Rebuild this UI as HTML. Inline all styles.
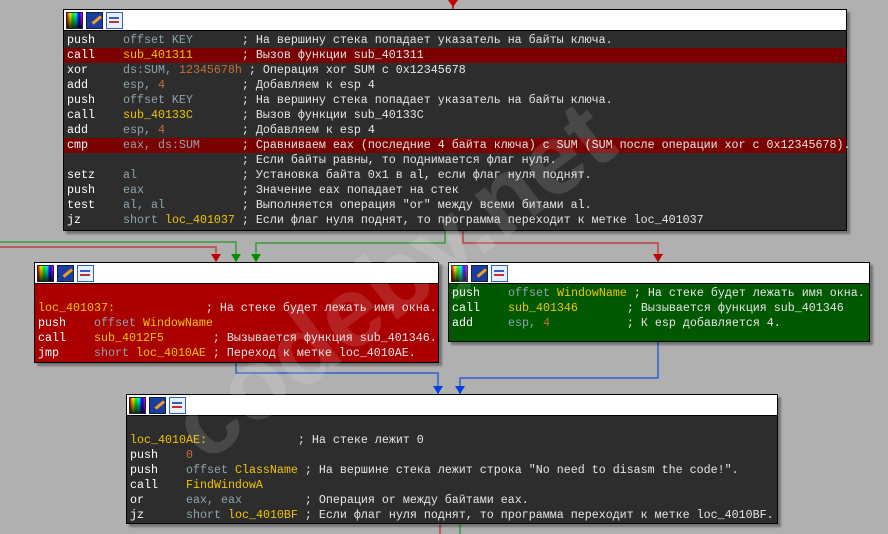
<!DOCTYPE html>
<html><head><meta charset="utf-8"><style>
body{margin:0;width:888px;height:534px;background:#b0b0b0;position:relative;overflow:hidden;font-family:"Liberation Mono",monospace;}
.blk{position:absolute;border:1px solid #000;box-shadow:3px 3px 2px rgba(0,0,0,.35);}
.hd{background:#fff;height:20px;border-bottom:1px solid #000;position:relative}
.ic{position:absolute;top:2px;width:15px;height:15px;border:1px solid #223}
.ic1{left:2px;background:linear-gradient(90deg,#f00,#ff0,#0f0,#0ff,#00f,#f0f);}
.ic1:after{content:"";position:absolute;inset:0;background:linear-gradient(#0000,#000c)}
.ic2{left:22px;background:#1a3ea0;border-color:#123}
.ic2:after{content:"";position:absolute;left:3px;top:2px;width:11px;height:3px;background:#f0a020;transform:rotate(-40deg);transform-origin:right}
.ic3{left:42px;background:#e8f0ff;border-color:#3060c0}
.ic3:after{content:"";position:absolute;left:2px;top:4px;width:10px;height:2px;background:#3060c0;box-shadow:0 4px 0 #c03030}
.bd{font-size:11.67px;line-height:15px;white-space:pre;color:#e6e6e6;padding:2px 0 0 3px}
.hl{background:#7a0000;margin-left:-3px;padding-left:3px}
.g{color:#8fa3ad}.y{color:#f0c400}.n{color:#cc6a3a}.w{color:#fff}
.ln{position:absolute}
</style></head><body>
<svg class="ln" width="888" height="534" style="left:0;top:0">
<g fill="none" stroke-width="1.5">
<path d="M453 0V9" stroke="#c00000"/>
<path d="M445 230V243H256V262" stroke="#3a9a3a"/>
<path d="M0 242H236V262" stroke="#3a9a3a"/>
<path d="M0 247H216V262" stroke="#c04040"/>
<path d="M463 230V243H658V262" stroke="#c04040"/>
<path d="M236 362V373H438V394" stroke="#3060d0"/>
<path d="M658 341V378H460V394" stroke="#3060d0"/>
<path d="M440 524V534" stroke="#c04040"/>
<path d="M460 524V534" stroke="#3a9a3a"/>
</g>
<g>
<path d="M448 0h10l-5 7z" fill="#c00000"/>
<path d="M211 254h10l-5 8z" fill="#c00000"/>
<path d="M231 254h10l-5 8z" fill="#009000"/>
<path d="M251 254h10l-5 8z" fill="#009000"/>
<path d="M653 254h10l-5 8z" fill="#c00000"/>
<path d="M433 386h10l-5 8z" fill="#0040e0"/>
<path d="M455 386h10l-5 8z" fill="#0040e0"/>
</g>
</svg>

<div class="blk" style="left:63px;top:9px;width:782px;height:220px;background:#2d2d2d">
<div class="hd"><i class="ic ic1"></i><i class="ic ic2"></i><i class="ic ic3"></i></div>
<div class="bd"><span class="w">push</span>    <span class="g">offset KEY</span>       ; На вершину стека попадает указатель на байты ключа.
<div class="hl"><span class="w">call</span>    <span class="y">sub_401311</span>       ; Вызов функции sub_401311</div><span class="w">xor</span>     <span class="g">ds:SUM,</span> <span class="n">12345678h</span> ; Операция xor SUM с 0x12345678
<span class="w">add</span>     <span class="g">esp,</span> <span class="n">4</span>           ; Добавляем к esp 4
<span class="w">push</span>    <span class="g">offset KEY</span>       ; На вершину стека попадает указатель на байты ключа.
<span class="w">call</span>    <span class="y">sub_40133C</span>       ; Вызов функции sub_40133C
<span class="w">add</span>     <span class="g">esp,</span> <span class="n">4</span>           ; Добавляем к esp 4
<div class="hl"><span class="w">cmp</span>     <span class="g">eax, ds:SUM</span>      ; Сравниваем eax (последние 4 байта ключа) с SUM (SUM после операции xor с 0x12345678).</div>                         ; Если байты равны, то поднимается флаг нуля.
<span class="w">setz</span>    <span class="g">al</span>               ; Установка байта 0x1 в al, если флаг нуля поднят.
<span class="w">push</span>    <span class="g">eax</span>              ; Значение eax попадает на стек
<span class="w">test</span>    <span class="g">al, al</span>           ; Выполняется операция "or" между всеми битами al.
<span class="w">jz</span>      <span class="g">short</span> <span class="y">loc_401037</span> ; Если флаг нуля поднят, то программа переходит к метке loc_401037</div>
</div>

<div class="blk" style="left:34px;top:262px;width:403px;height:99px;background:#aa0000">
<div class="hd"><i class="ic ic1"></i><i class="ic ic2"></i><i class="ic ic3"></i></div>
<div class="bd">
<span class="y">loc_401037:</span>             ; На стеке будет лежать имя окна.
<span class="w">push</span>    <span class="g">offset</span> <span class="y">WindowName</span>
<span class="w">call</span>    <span class="y">sub_4012F5</span>       ; Вызывается функция sub_401346.
<span class="w">jmp</span>     <span class="g">short</span> <span class="y">loc_4010AE</span> ; Переход к метке loc_4010AE.</div>
</div>

<div class="blk" style="left:448px;top:262px;width:420px;height:78px;background:#005800">
<div class="hd"><i class="ic ic1"></i><i class="ic ic2"></i><i class="ic ic3"></i></div>
<div class="bd"><span class="w">push</span>    <span class="g">offset</span> <span class="y">WindowName</span> ; На стеке будет лежать имя окна.
<span class="w">call</span>    <span class="y">sub_401346</span>       ; Вызывается функция sub_401346
<span class="w">add</span>     <span class="g">esp,</span> <span class="n">4</span>           ; К esp добавляется 4.</div>
</div>

<div class="blk" style="left:126px;top:394px;width:650px;height:128px;background:#2d2d2d">
<div class="hd"><i class="ic ic1"></i><i class="ic ic2"></i><i class="ic ic3"></i></div>
<div class="bd">
<span class="y">loc_4010AE:</span>             ; На стеке лежит 0
<span class="w">push</span>    <span class="n">0</span>
<span class="w">push</span>    <span class="g">offset</span> <span class="y">ClassName</span> ; На вершине стека лежит строка "No need to disasm the code!".
<span class="w">call</span>    <span class="y">FindWindowA</span>
<span class="w">or</span>      <span class="g">eax, eax</span>         ; Операция or между байтами eax.
<span class="w">jz</span>      <span class="g">short</span> <span class="y">loc_4010BF</span> ; Если флаг нуля поднят, то программа переходит к метке loc_4010BF.</div>
</div>

<div style="position:absolute;left:185px;top:380px;font:bold 100px 'Liberation Sans',sans-serif;color:rgba(255,255,255,.13);transform:rotate(-37deg);transform-origin:left center;white-space:nowrap">codeby.net</div>
</body></html>
